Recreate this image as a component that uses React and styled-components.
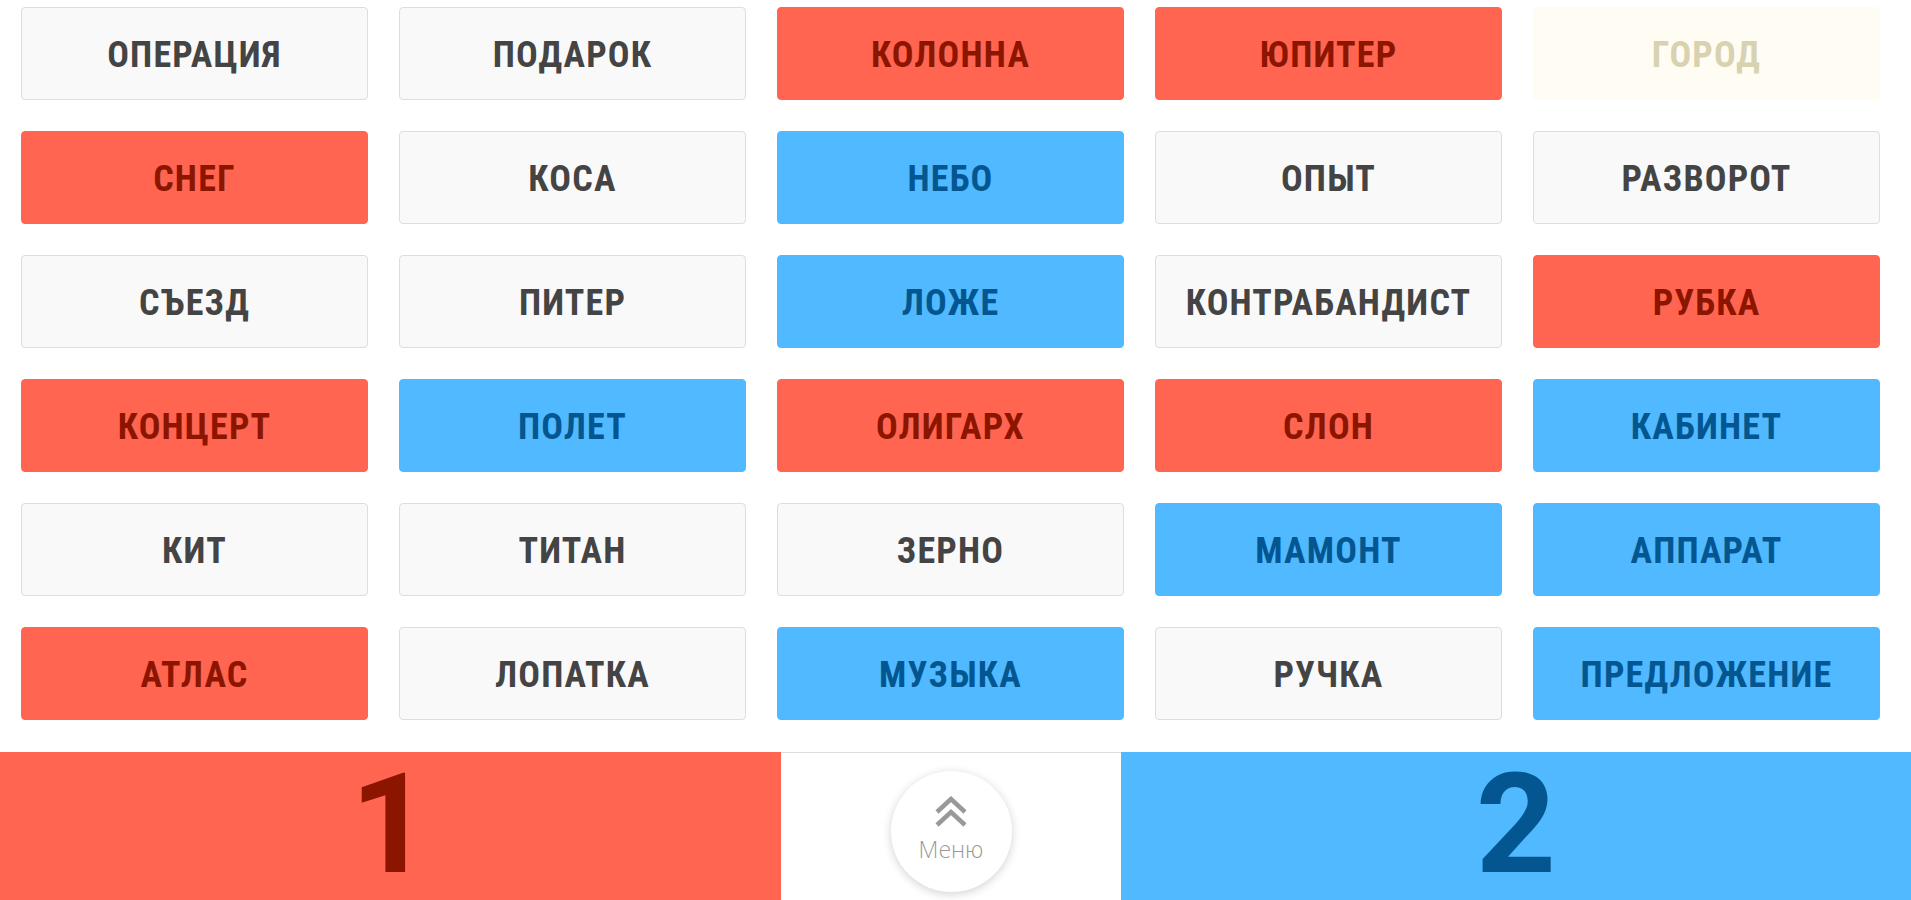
import React from 'react';
import styled, { createGlobalStyle } from 'styled-components';

const GlobalStyle = createGlobalStyle`
  html, body {
    margin: 0;
    padding: 0;
    background: #fff;
    overflow: hidden;
  }
  body {
    font-family: 'Roboto Condensed', Roboto, 'Liberation Sans', sans-serif;
  }
`;

const palette = {
  neutral: { bg: '#f9f9f9', fg: '#444444', border: '#dddddd' },
  red: { bg: '#ff6551', fg: '#8c1500', border: '#ff6551' },
  blue: { bg: '#51b9ff', fg: '#03568f', border: '#51b9ff' },
  cream: { bg: '#fffcf3', fg: '#d8d2b0', border: '#fffcf3' }
};

const words = [
  ['ОПЕРАЦИЯ', 'neutral'],
  ['ПОДАРОК', 'neutral'],
  ['КОЛОННА', 'red'],
  ['ЮПИТЕР', 'red'],
  ['ГОРОД', 'cream'],
  ['СНЕГ', 'red'],
  ['КОСА', 'neutral'],
  ['НЕБО', 'blue'],
  ['ОПЫТ', 'neutral'],
  ['РАЗВОРОТ', 'neutral'],
  ['СЪЕЗД', 'neutral'],
  ['ПИТЕР', 'neutral'],
  ['ЛОЖЕ', 'blue'],
  ['КОНТРАБАНДИСТ', 'neutral'],
  ['РУБКА', 'red'],
  ['КОНЦЕРТ', 'red'],
  ['ПОЛЕТ', 'blue'],
  ['ОЛИГАРХ', 'red'],
  ['СЛОН', 'red'],
  ['КАБИНЕТ', 'blue'],
  ['КИТ', 'neutral'],
  ['ТИТАН', 'neutral'],
  ['ЗЕРНО', 'neutral'],
  ['МАМОНТ', 'blue'],
  ['АППАРАТ', 'blue'],
  ['АТЛАС', 'red'],
  ['ЛОПАТКА', 'neutral'],
  ['МУЗЫКА', 'blue'],
  ['РУЧКА', 'neutral'],
  ['ПРЕДЛОЖЕНИЕ', 'blue']
];

const Page = styled.div`
  width: 1911px;
  height: 900px;
  display: flex;
  flex-direction: column;
`;

const Board = styled.div`
  display: grid;
  grid-template-columns: repeat(5, 347px);
  grid-auto-rows: 93px;
  column-gap: 31px;
  row-gap: 31px;
  padding: 7px 0 0 21px;
`;

const Card = styled.div`
  display: flex;
  align-items: center;
  justify-content: center;
  box-sizing: border-box;
  padding-top: 2px;
  border-radius: 4px;
  border: 1px solid ${(p) => palette[p.$kind].border};
  background: ${(p) => palette[p.$kind].bg};
  color: ${(p) => palette[p.$kind].fg};
  font-size: 36px;
  font-weight: 700;
  letter-spacing: 1.2px;
`;

const ScoreBar = styled.div`
  margin-top: 32px;
  height: 148px;
  display: flex;
  overflow: hidden;
`;

const Score = styled.div`
  display: flex;
  justify-content: center;
  align-items: flex-start;
  padding-top: 13px;
  box-sizing: border-box;
  background: ${(p) => (p.$team === 'red' ? '#ff6551' : '#51b9ff')};
  color: ${(p) => (p.$team === 'red' ? '#8c1500' : '#03568f')};
  font-family: Roboto, 'Liberation Sans', sans-serif;
  font-size: 140px;
  font-weight: 700;
  line-height: 0.85;
  width: ${(p) => p.$width || 'auto'};
  flex: ${(p) => (p.$width ? 'none' : '1')};
`;

const MenuSlot = styled.div`
  width: 340px;
  box-sizing: border-box;
  border-top: 1px solid #dddddd;
  display: flex;
  justify-content: center;
  padding-top: 18px;
`;

const MenuButton = styled.button`
  width: 121px;
  height: 121px;
  border-radius: 50%;
  border: none;
  background: #fff;
  box-shadow: 0 2px 10px rgba(0, 0, 0, 0.18);
  display: flex;
  flex-direction: column;
  align-items: center;
  padding: 25px 0 0;
  box-sizing: border-box;
  color: #9a9a9a;
  font-family: 'Open Sans', 'Liberation Sans', sans-serif;
  font-size: 23px;
  font-weight: 300;
  cursor: pointer;
`;

const MenuLabel = styled.span`
  margin-top: 11px;
  line-height: 1;
`;

const ChevronsUp = () => (
  <svg width="34" height="31" viewBox="0 0 34 31" fill="none">
    <polyline points="3,16 17,3 31,16" stroke="#999" strokeWidth="4.5" />
    <polyline points="3,29 17,16 31,29" stroke="#999" strokeWidth="4.5" />
  </svg>
);

export default function App() {
  return (
    <>
      <GlobalStyle />
      <Page>
        <Board>
          {words.map(([word, kind]) => (
            <Card key={word} $kind={kind}>
              {word}
            </Card>
          ))}
        </Board>
        <ScoreBar>
          <Score $team="red" $width="781px">1</Score>
          <MenuSlot>
            <MenuButton>
              <ChevronsUp />
              <MenuLabel>Меню</MenuLabel>
            </MenuButton>
          </MenuSlot>
          <Score $team="blue">2</Score>
        </ScoreBar>
      </Page>
    </>
  );
}
